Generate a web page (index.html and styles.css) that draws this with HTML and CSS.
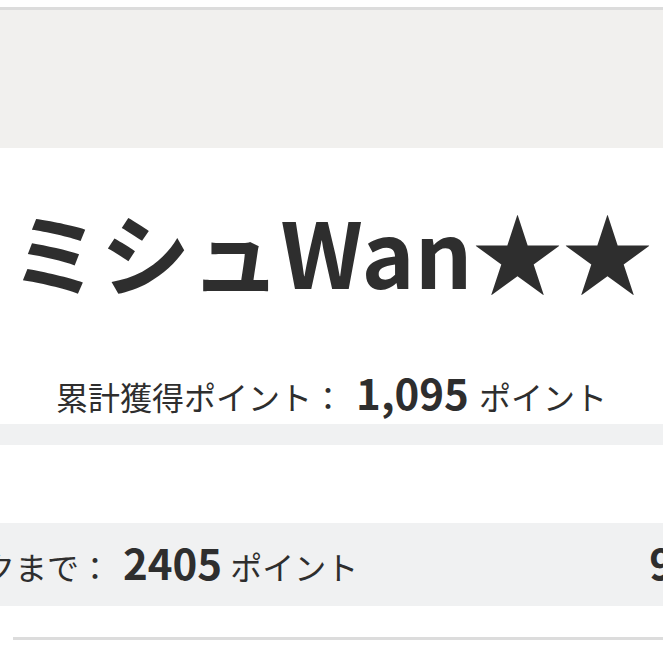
FILE: index.html
```html
<!DOCTYPE html>
<html lang="ja">
<head>
<meta charset="utf-8">
<title>ミシュWan★★</title>
<link rel="stylesheet" href="styles.css">
</head>
<body>
<div class="page">
  <div class="top-rule"></div>
  <div class="cover"></div>
  <section class="profile">
    <h1 class="name">ミシュWan★★</h1>
    <p class="total">
      <span class="label">累計獲得ポイント：</span>
      <span class="num">1,095</span>
      <span class="unit">ポイント</span>
    </p>
  </section>
  <div class="divider-band"></div>
  <div class="spacer"></div>
  <div class="next-band">
    <span class="label next-label">次のランクまで：</span>
    <span class="num">2405</span>
    <span class="unit">ポイント</span>
    <span class="num next-right">9</span>
  </div>
  <div class="bottom-space"></div>
  <div class="bottom-rule"></div>
</div>
</body>
</html>
```

FILE: styles.css
```css
html, body {
  margin: 0;
  padding: 0;
  background: #ffffff;
}
body {
  width: 663px;
  height: 663px;
  overflow: hidden;
  font-family: "Noto Sans CJK JP", "Noto Sans", sans-serif;
  color: #2e2e2e;
}
.page {
  display: flex;
  flex-direction: column;
}
.top-rule {
  margin-top: 7px;
  height: 3px;
  background: #dcdcdc;
}
.cover {
  height: 138px;
  background: #f1f0ee;
}
.profile {
  padding: 57px 0 11px;
  display: flex;
  flex-direction: column;
  align-items: center;
}
.name {
  margin: 0;
  font-size: 90px;
  line-height: 1;
  font-weight: 700;
  white-space: nowrap;
  letter-spacing: 0;
}
.total {
  margin: 76px 0 0;
  display: flex;
  align-items: baseline;
  gap: 12px;
  white-space: nowrap;
}
.label, .unit {
  font-size: 32px;
  line-height: 1;
  font-weight: 400;
}
.num {
  font-size: 42px;
  line-height: 1;
  font-weight: 700;
}
.unit {
  margin-left: -2px;
}
.divider-band {
  height: 21px;
  background: #f0f1f2;
}
.spacer {
  height: 78px;
}
.next-band {
  height: 83px;
  box-sizing: border-box;
  padding-top: 18px;
  background: #f0f1f2;
  display: flex;
  align-items: baseline;
  gap: 12px;
  white-space: nowrap;
  overflow: hidden;
}
.next-label {
  margin-left: -145px;
}
.next-band .unit {
  margin-left: -4px;
}
.next-right {
  margin-left: auto;
  margin-right: -11px;
}
.bottom-space {
  height: 31px;
}
.bottom-rule {
  margin-left: 13px;
  height: 3px;
  background: #dcdcdc;
}
```
